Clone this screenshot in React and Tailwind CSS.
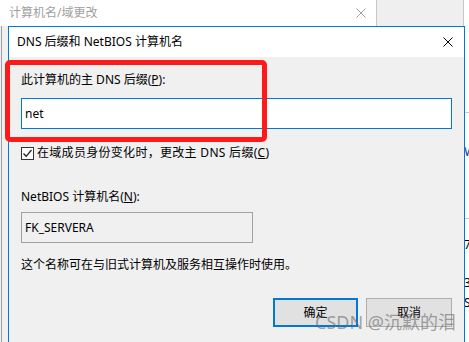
import React from "react";

const font = { fontFamily: '"Noto Sans", "Noto Sans CJK SC", sans-serif' };

const CloseIcon = ({ color = "#000", size = 10 }) => (
    <svg width={size} height={size} viewBox="0 0 10 10">
        <path d="M0.5 0.5 L9.5 9.5 M9.5 0.5 L0.5 9.5" stroke={color} strokeWidth="1" />
    </svg>
);

const CheckBox = () => (
    <div className="w-[13px] h-[13px] border border-[#333] bg-white flex items-center justify-center shrink-0">
        <svg width="11" height="11" viewBox="0 0 11 11">
            <path d="M1.5 5.5 L4.2 8.3 L9.5 2" fill="none" stroke="#222" strokeWidth="1.3" />
        </svg>
    </div>
);

const DnsDialog = () => {
    return (
        <div className="absolute left-[8px] top-[26px] w-[457px] h-[330px] border border-[#0078d7] bg-[#f0f0f0] flex flex-col">
            {/* title bar */}
            <div className="h-[30px] bg-white flex items-center justify-between pl-[8px] pr-[11px] shrink-0">
                <span className="text-[12px] text-black">DNS 后缀和 NetBIOS 计算机名</span>
                <CloseIcon />
            </div>

            <div className="flex flex-col px-[12px] pt-[15px] text-[12px] text-black">
                <div className="h-[16px] leading-[16px]">
                    此计算机的主 DNS 后缀(<span className="underline">P</span>):
                </div>
                <div className="mt-[10px] h-[31px] w-[431px] border border-[#0078d7] bg-white flex items-center px-[3px]">
                    net
                </div>

                <div className="mt-[16px] flex items-center gap-[3px] h-[16px]">
                    <CheckBox />
                    <span className="leading-[16px] tracking-[0.3px]">
                        在域成员身份变化时，更改主 DNS 后缀(<span className="underline">C</span>)
                    </span>
                </div>

                <div className="mt-[28px] h-[16px] leading-[16px]">
                    NetBIOS 计算机名(<span className="underline">N</span>):
                </div>
                <div className="mt-[7px] h-[31px] w-[232px] border border-[#a0a0a0] bg-[#f0f0f0] flex items-center px-[3px]">
                    FK_SERVERA
                </div>

                <div className="mt-[14px] h-[16px] leading-[16px]">
                    这个名称可在与旧式计算机及服务相互操作时使用。
                </div>

                <div className="mt-[25px] flex justify-end gap-[8px]">
                    <button className="w-[85px] h-[29px] border-2 border-[#0078d7] bg-[#e1e1e1] text-[12px]">
                        确定
                    </button>
                    <button className="w-[86px] h-[29px] border border-[#adadad] bg-[#e1e1e1] text-[12px]">
                        取消
                    </button>
                </div>
            </div>
        </div>
    );
};

const App = () => {
    return (
        <div className="relative w-[469px] h-[342px] overflow-hidden bg-[#f0f0f0]" style={font}>
            {/* window behind */}
            <div className="absolute inset-0 flex flex-col">
                <div className="h-[26px] flex shrink-0">
                    <div className="w-[376px] bg-white flex items-center justify-between pl-[9px] pr-[10px]">
                        <span className="text-[12px] text-[#a0a0a0]">计算机名/域更改</span>
                        <CloseIcon color="#a0a0a0" />
                    </div>
                    <div className="w-[1px] bg-[#c8c8c8]" />
                    <div className="w-[86px] bg-[#efefef]" />
                    <div className="w-[1px] bg-[#c8c8c8]" />
                    <div className="flex-1 bg-white" />
                </div>
                <div className="flex-1 flex">
                    <div className="w-[1px] ml-[1px] bg-[#a0a0a0]" />
                    <div className="flex-1" />
                    <div className="relative w-[4px] bg-white">
                        <div className="absolute left-0 top-[86px] w-[4px] h-[1px] bg-[#c8c8c8]" />
                        <div className="absolute left-0 top-[192px] w-[4px] h-[1px] bg-[#c8c8c8]" />
                        <span className="absolute left-[-1px] top-[116px] text-[13px] text-[#1a3a9a]">W</span>
                        <span className="absolute left-[-1px] top-[210px] text-[12px] text-black">7</span>
                        <span className="absolute left-[-1px] top-[248px] text-[12px] text-black">3</span>
                        <span className="absolute left-[-1px] top-[268px] text-[12px] text-black">S</span>
                    </div>
                </div>
            </div>

            <DnsDialog />

            {/* red annotation box */}
            <div className="absolute left-[5px] top-[60px] w-[262px] h-[82px] border-[5px] border-[#ff1a1a] rounded-[5px]" />

            {/* watermark */}
            <div className="absolute left-[315px] top-[310px] text-[18px] leading-[24px] text-[rgba(105,105,105,0.6)] whitespace-nowrap">
                CSDN @沉默的泪
            </div>
        </div>
    );
};

export default App;
